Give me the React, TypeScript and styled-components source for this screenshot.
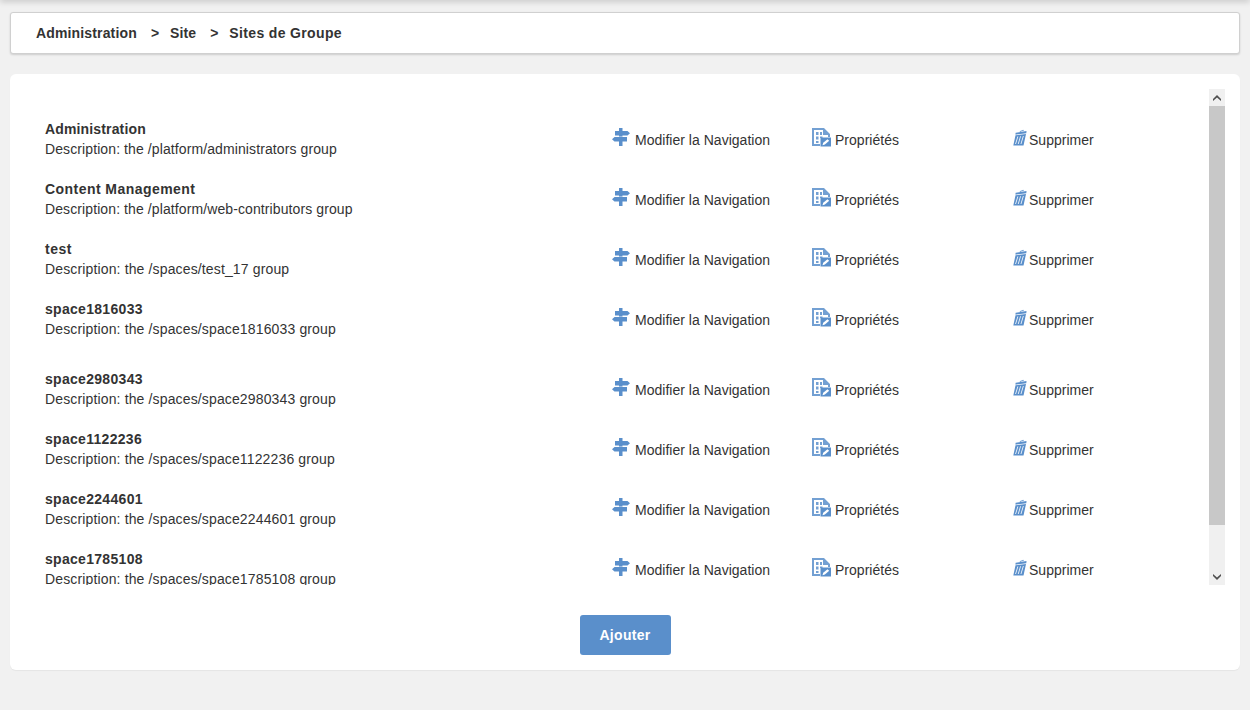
import React from "react";
import styled, { createGlobalStyle } from "styled-components";

const Global = createGlobalStyle`
  html, body { margin: 0; padding: 0; height: 100%; }
  body { background: #f1f1f1; font-family: "Liberation Sans", Arial, sans-serif; font-size: 14px; color: #333; overflow: hidden; }
  * { box-sizing: border-box; }
`;

const Page = styled.div`
  display: flex;
  flex-direction: column;
  height: 710px;
  padding: 12px 10px 0;
  position: relative;
`;
const TopShade = styled.div`
  position: absolute;
  left: 0;
  right: 0;
  top: -4px;
  height: 4px;
  box-shadow: 0 1px 6px rgba(0, 0, 0, 0.25);
`;
const Breadcrumb = styled.nav`
  height: 42px;
  display: flex;
  align-items: center;
  padding-left: 25px;
  background: #fff;
  border: 1px solid #d0d0d0;
  border-radius: 3px;
  box-shadow: 0 1px 2px rgba(0, 0, 0, 0.15);
  font-weight: 700;
`;
const Crumb = styled.span<{ $track: number }>`
  letter-spacing: ${(p) => p.$track}px;
`;
const Sep = styled.span`
  margin: 0 11px 0 14px;
`;
const Card = styled.main`
  margin-top: 20px;
  height: 596px;
  background: #fff;
  border-radius: 6px;
  box-shadow: 0 1px 1px rgba(0, 0, 0, 0.05);
  padding: 15px 15px 15px 0;
  display: flex;
  flex-direction: column;
`;
const Scroller = styled.div`
  height: 496px;
  display: flex;
`;
const List = styled.div`
  flex: 1;
  min-width: 0;
  overflow: hidden;
  padding-top: 30px;
`;
const Row = styled.div<{ $tall?: boolean }>`
  display: flex;
  height: ${(p) => (p.$tall ? 70 : 60)}px;
  padding-left: 35px;
`;
const Info = styled.div`
  flex: none;
  width: 567px;
  line-height: 20px;
`;
const Name = styled.div<{ $track: number }>`
  font-weight: 700;
  letter-spacing: ${(p) => p.$track}px;
`;
const Description = styled.div<{ $track: number }>`
  letter-spacing: ${(p) => p.$track}px;
`;
const Action = styled.a`
  flex: none;
  width: 200px;
  height: 42px;
  display: flex;
  align-items: center;
  color: #333;
  letter-spacing: 0.02px;
`;
const Icon = styled.svg<{ $gap: number }>`
  flex: none;
  margin-right: ${(p) => p.$gap}px;
  margin-top: -4px;
  color: #5a8fcb;
`;
const Track = styled.div`
  flex: none;
  width: 16px;
  background: #f0f0f0;
  display: flex;
  flex-direction: column;
`;
const Arrow = styled.div`
  height: 17px;
  display: flex;
  align-items: center;
  justify-content: center;
`;
const Thumb = styled.div`
  height: 419px;
  background: #c8c8c8;
`;
const Rest = styled.div`
  flex: 1;
`;
const Footer = styled.div`
  display: flex;
  justify-content: center;
  padding: 30px 0 0 15px;
`;
const AddButton = styled.button`
  width: 91px;
  height: 40px;
  border: 0;
  border-radius: 3px;
  background: #5a8fcb;
  color: #fff;
  font: 700 14px "Liberation Sans", Arial, sans-serif;
  letter-spacing: 0.3px;
`;

const SignIcon = () => (
  <Icon $gap={5} width="18" height="20" viewBox="0 0 18 20">
    <path fill="currentColor" d="M7 0h3.500v3H15.500L18 5.250 15.500 7.500H10.500V9H15v4.500H10.500V18H7V13.500H2.500L0 11.250 2.500 9H7V7.500H3V3H7z" />
    <path fill="#fff" opacity="0.8" d="M3 8h9.500v.5H3z" />
  </Icon>
);
const BuildingIcon = () => (
  <Icon $gap={4} width="19" height="20" viewBox="0 0 19 20">
    <path fill="currentColor" opacity="0.85" d="M0 0h12l6 6v3h-2V7h-5V2H2v14h6v2H0z" />
    <path fill="currentColor" opacity="0.85" d="M4 4h2.500v3H4zM8 4h2v3H8zM4 8.500h2.500v3H4zM8 8.500h2.500v1.500H8zM4 13h2.500v2H4z" />
    <path fill="currentColor" d="M8.500 9.500H19v9H8.500z" />
    <path fill="#fff" d="M10.500 17.200l.7-2.400 4.300-3.600 1.700 1.500-4.300 3.700z" />
  </Icon>
);
const TrashIcon = () => (
  <Icon $gap={2} width="15" height="18" viewBox="-1 0 15 18">
    <path fill="currentColor" opacity="0.85" d="M6.500 2.200l3.800-1.400.6 1.200-1 .3-.3-.3-2.400.9z" />
    <path fill="currentColor" d="M2.700 3.800L13.500 2l-.2 2.200L2.300 5.600zM2.500 6.300L13 5l-2.500 11.500H.3z" />
    <path fill="#fff" opacity="0.9" d="M4.400 7.600h.9L3 15h-.9zM7.100 7.300h.9L5.700 15h-.9zM9.900 7h.9L8.400 15h-.9z" />
  </Icon>
);

const groups: [string, string, number, number][] = [
  ["Administration", "the /platform/administrators group", 0.15, 0.1],
  ["Content Management", "the /platform/web-contributors group", 0.45, 0.1],
  ["test", "the /spaces/test_17 group", 0.5, 0.14],
  ["space1816033", "the /spaces/space1816033 group", 0.3, 0.14],
  ["space2980343", "the /spaces/space2980343 group", 0.3, 0.14],
  ["space1122236", "the /spaces/space1122236 group", 0.3, 0.14],
  ["space2244601", "the /spaces/space2244601 group", 0.3, 0.14],
  ["space1785108", "the /spaces/space1785108 group", 0.3, 0.14],
];

export default function App() {
  return (
    <Page>
      <Global />
      <TopShade />
      <Breadcrumb>
        <Crumb $track={0.15}>Administration</Crumb>
        <Sep>&gt;</Sep>
        <Crumb $track={0.1}>Site</Crumb>
        <Sep>&gt;</Sep>
        <Crumb $track={0.35}>Sites de Groupe</Crumb>
      </Breadcrumb>
      <Card>
        <Scroller>
          <List>
            {groups.map(([name, desc, track, descTrack], i) => (
              <Row key={name} $tall={i === 3}>
                <Info>
                  <Name $track={track}>{name}</Name>
                  <Description $track={descTrack}>Description: {desc}</Description>
                </Info>
                <Action><SignIcon />Modifier la Navigation</Action>
                <Action><BuildingIcon />Propriétés</Action>
                <Action><TrashIcon />Supprimer</Action>
              </Row>
            ))}
          </List>
          <Track>
            <Arrow>
              <svg width="8" height="6" viewBox="0 0 8 6"><path d="M0 6V4l4-4 4 4v2L4 2.500z" fill="#505050" /></svg>
            </Arrow>
            <Thumb />
            <Rest />
            <Arrow>
              <svg width="8" height="6" viewBox="0 0 8 6"><path d="M0 0v2l4 4 4-4V0L4 3.500z" fill="#505050" /></svg>
            </Arrow>
          </Track>
        </Scroller>
        <Footer>
          <AddButton>Ajouter</AddButton>
        </Footer>
      </Card>
    </Page>
  );
}
